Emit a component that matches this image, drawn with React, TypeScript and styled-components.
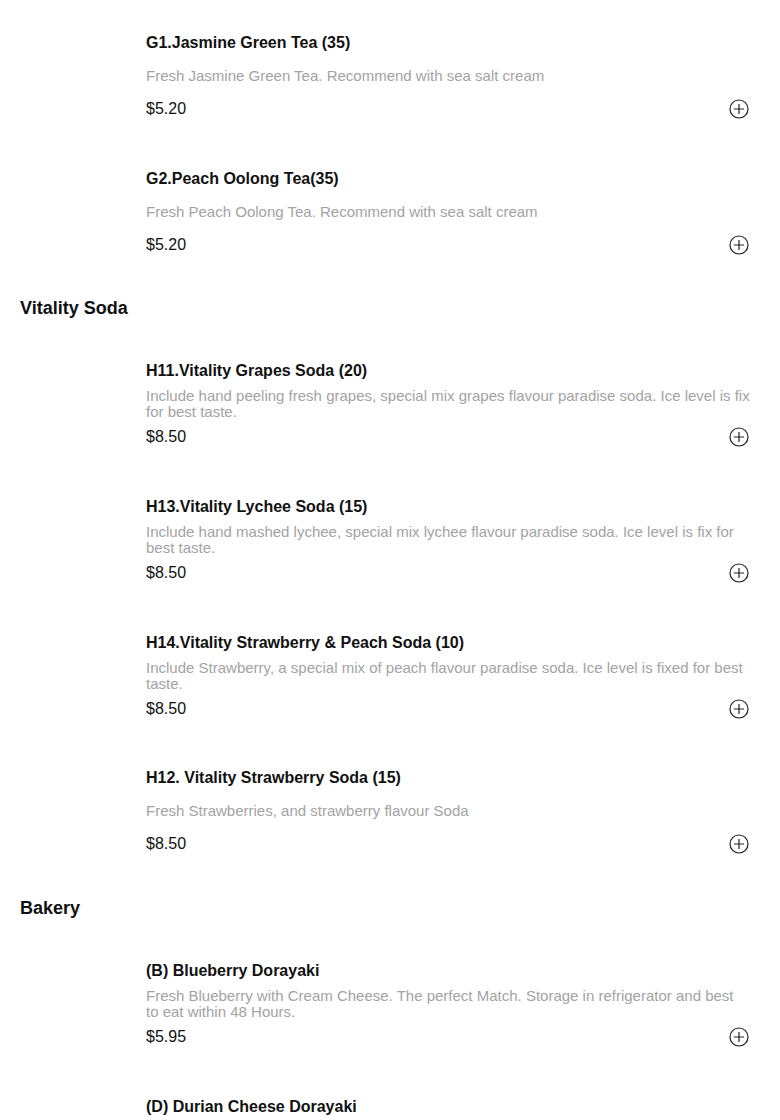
import React from "react";
import styled, { createGlobalStyle } from "styled-components";

const Global = createGlobalStyle`
  html, body { margin: 0; padding: 0; background: #fff; }
  body { font-family: "Liberation Sans", Arial, sans-serif; color: #111; }
`;

const Page = styled.div`
  padding-top: 8px;
  width: 780px;
`;

const SectionTitle = styled.h2`
  margin: 0;
  padding: 18px 20px 17px;
  font-size: 18px;
  line-height: 22px;
  font-weight: 700;
  color: #111;
`;

const Item = styled.div`
  display: grid;
  grid-template-columns: 106px 1fr;
  column-gap: 20px;
  padding: 25px 30px 24.7px 20px;
`;

const Thumb = styled.div`
  width: 106px;
  height: 86px;
`;

const Content = styled.div`
  display: flex;
  flex-direction: column;
  justify-content: space-between;
  height: 86px;
`;

const Name = styled.div`
  font-size: 16px;
  line-height: 20px;
  font-weight: 700;
  color: #111;
`;

const Desc = styled.div`
  font-size: 15px;
  line-height: 16px;
  color: #a3a3a3;
`;

const PriceRow = styled.div`
  display: flex;
  align-items: center;
  justify-content: space-between;
  height: 20px;
`;

const Price = styled.span`
  font-size: 16px;
  line-height: 20px;
  color: #111;
`;

const AddButton = styled.button`
  border: 0;
  background: none;
  padding: 0;
  width: 20px;
  height: 20px;
  display: flex;
  align-items: center;
  justify-content: center;
  cursor: pointer;
  margin-right: 1px;
`;

const PlusIcon = () => (
  <svg width="20" height="20" viewBox="0 0 20 20" fill="none">
    <circle cx="10" cy="10" r="9" stroke="#222" strokeWidth="1.2" />
    <path d="M10 5v10M5 10h10" stroke="#222" strokeWidth="1.2" />
  </svg>
);

type MenuItem = { name: string; desc: string; price: string };

const sections: { title?: string; items: MenuItem[] }[] = [
  {
    items: [
      { name: "G1.Jasmine Green Tea (35)", desc: "Fresh Jasmine Green Tea. Recommend with sea salt cream", price: "$5.20" },
      { name: "G2.Peach Oolong Tea(35)", desc: "Fresh Peach Oolong Tea. Recommend with sea salt cream", price: "$5.20" },
    ],
  },
  {
    title: "Vitality Soda",
    items: [
      { name: "H11.Vitality Grapes Soda (20)", desc: "Include hand peeling fresh grapes, special mix grapes flavour paradise soda. Ice level is fix for best taste.", price: "$8.50" },
      { name: "H13.Vitality Lychee Soda (15)", desc: "Include hand mashed lychee, special mix lychee flavour paradise soda. Ice level is fix for best taste.", price: "$8.50" },
      { name: "H14.Vitality Strawberry & Peach Soda (10)", desc: "Include Strawberry, a special mix of peach flavour paradise soda. Ice level is fixed for best taste.", price: "$8.50" },
      { name: "H12. Vitality Strawberry Soda (15)", desc: "Fresh Strawberries, and strawberry flavour Soda", price: "$8.50" },
    ],
  },
  {
    title: "Bakery",
    items: [
      { name: "(B) Blueberry Dorayaki", desc: "Fresh Blueberry with Cream Cheese. The perfect Match. Storage in refrigerator and best to eat within 48 Hours.", price: "$5.95" },
      { name: "(D) Durian Cheese Dorayaki", desc: "Fresh Durian with Cream Cheese. Storage in refrigerator and best to eat within 48 Hours.", price: "$5.95" },
    ],
  },
];

export default function App() {
  return (
    <>
      <Global />
      <Page>
        {sections.map((s, si) => (
          <section key={si}>
            {s.title && <SectionTitle>{s.title}</SectionTitle>}
            {s.items.map((it) => (
              <Item key={it.name}>
                <Thumb />
                <Content>
                  <Name>{it.name}</Name>
                  <Desc>{it.desc}</Desc>
                  <PriceRow>
                    <Price>{it.price}</Price>
                    <AddButton aria-label="add">
                      <PlusIcon />
                    </AddButton>
                  </PriceRow>
                </Content>
              </Item>
            ))}
          </section>
        ))}
      </Page>
    </>
  );
}
